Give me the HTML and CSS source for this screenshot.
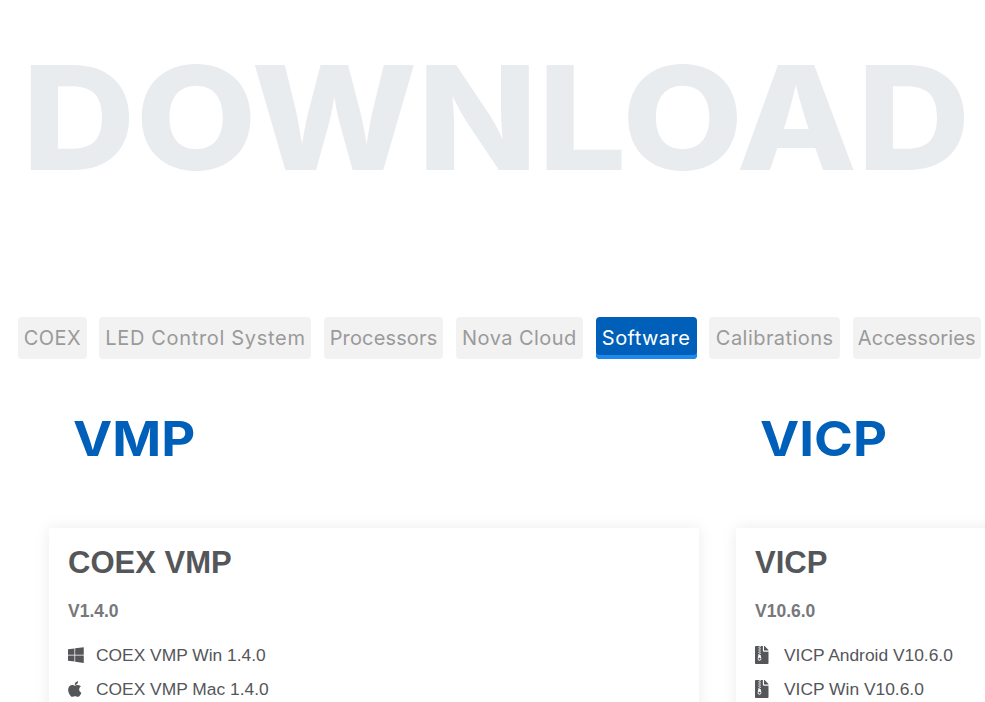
FILE: index.html
```html
<!DOCTYPE html>
<html lang="en">
<head>
    <meta charset="UTF-8">
    <meta name="viewport" content="width=device-width, initial-scale=1.0">
    <title>Download</title>
    <link rel="stylesheet" href="styles.css">
</head>
<body>
    <!-- Page Title -->
    <h1 class="page-title"><span>DOWNLOAD</span></h1>

    <!-- Category Tabs -->
    <nav class="tabs">
        <a href="#" class="tab">COEX</a>
        <a href="#" class="tab tab-long">LED Control System</a>
        <a href="#" class="tab tab-tight">Processors</a>
        <a href="#" class="tab">Nova Cloud</a>
        <a href="#" class="tab active">Software</a>
        <a href="#" class="tab">Calibrations</a>
        <a href="#" class="tab tab-tight">Accessories</a>
    </nav>

    <!-- Software Columns -->
    <div class="columns">
        <section class="column">
            <h2 class="column-title"><span>VMP</span></h2>
            <div class="card">
                <h3>COEX VMP</h3>
                <h4>V1.4.0</h4>
                <ul class="files">
                    <li>
                        <svg class="icon" viewBox="0 0 448 512" preserveAspectRatio="xMinYMid"><path d="M0 93.7l183.6-25.3v177.4H0V93.7zm0 324.6l183.6 25.3V268.4H0v149.9zm203.8 28L448 480V268.4H203.8v177.9zm0-380.6v180.1H448V32L203.8 65.7z"/></svg>
                        COEX VMP Win 1.4.0
                    </li>
                    <li>
                        <svg class="icon" viewBox="0 0 384 512" preserveAspectRatio="xMinYMid"><path d="M318.7 268.7c-.2-36.7 16.4-64.4 50-84.8-18.8-26.9-47.2-41.7-84.7-44.6-35.5-2.8-74.3 20.7-88.5 20.7-15 0-49.4-19.7-76.4-19.7C63.3 141.2 4 184.8 4 273.5q0 39.3 14.4 81.2c12.8 36.7 59 126.7 107.2 125.2 25.2-.6 43-17.9 75.8-17.9 31.8 0 48.3 17.9 76.4 17.9 48.6-.7 90.4-82.5 102.6-119.3-65.2-30.7-61.7-90-61.7-91.9zm-56.6-164.2c27.3-32.4 24.8-61.9 24-72.5-24.1 1.4-52 16.4-67.9 34.9-17.5 19.8-27.8 44.3-25.6 71.9 26.1 2 49.9-11.4 69.5-34.3z"/></svg>
                        COEX VMP Mac 1.4.0
                    </li>
                </ul>
            </div>
        </section>
        <section class="column">
            <h2 class="column-title"><span>VICP</span></h2>
            <div class="card">
                <h3>VICP</h3>
                <h4>V10.6.0</h4>
                <ul class="files">
                    <li>
                        <svg class="icon icon-file" viewBox="0 0 384 512" preserveAspectRatio="xMinYMid"><path d="M377 105L279.1 7c-4.5-4.5-10.6-7-17-7H256v128h128v-6.1c0-6.3-2.5-12.4-7-16.9zM128.4 336c-17.9 0-32.4 12.1-32.4 27 0 15 14.6 27 32.5 27s32.4-12.1 32.4-27-14.6-27-32.5-27zM224 136V0h-63.6v32h-32V0H24C10.7 0 0 10.7 0 24v464c0 13.3 10.7 24 24 24h336c13.3 0 24-10.7 24-24V160H248c-13.2 0-24-10.8-24-24zM95.9 32h32v32h-32zm32.3 384c-33.2 0-58-30.4-51.4-62.9L96.4 256v-32h32v-32h-32v-32h32v-32h-32V96h32V64h32v32h-32v32h32v32h-32v32h32v32h-32v32h22.1c5.7 0 10.7 4.1 11.8 9.7l17.3 87.7c6.4 32.4-18.4 62.6-51.4 62.6z"/></svg>
                        VICP Android V10.6.0
                    </li>
                    <li>
                        <svg class="icon icon-file" viewBox="0 0 384 512" preserveAspectRatio="xMinYMid"><path d="M377 105L279.1 7c-4.5-4.5-10.6-7-17-7H256v128h128v-6.1c0-6.3-2.5-12.4-7-16.9zM128.4 336c-17.9 0-32.4 12.1-32.4 27 0 15 14.6 27 32.5 27s32.4-12.1 32.4-27-14.6-27-32.5-27zM224 136V0h-63.6v32h-32V0H24C10.7 0 0 10.7 0 24v464c0 13.3 10.7 24 24 24h336c13.3 0 24-10.7 24-24V160H248c-13.2 0-24-10.8-24-24zM95.9 32h32v32h-32zm32.3 384c-33.2 0-58-30.4-51.4-62.9L96.4 256v-32h32v-32h-32v-32h32v-32h-32V96h32V64h32v32h-32v32h32v32h-32v32h32v32h-32v32h22.1c5.7 0 10.7 4.1 11.8 9.7l17.3 87.7c6.4 32.4-18.4 62.6-51.4 62.6z"/></svg>
                        VICP Win V10.6.0
                    </li>
                </ul>
            </div>
        </section>
    </div>
</body>
</html>
```

FILE: styles.css
```css
/* General Reset */
* {
    margin: 0;
    padding: 0;
    box-sizing: border-box;
}

html, body {
    height: 702px;
    overflow: hidden;
}

body {
    font-family: 'Liberation Sans', Arial, sans-serif;
    background: #fff;
    color: #54565a;
}

/* Page Title */
.page-title {
    font-family: 'Inter', sans-serif;
    font-size: 144px;
    font-weight: 800;
    line-height: 120px;
    color: #e9ecef;
    white-space: nowrap;
    padding: 58px 0 0 22px;
    height: 317px;
}

/* Inter is narrower than the original face, so widen it */
.page-title span {
    display: inline-block;
    transform: scaleX(1.09);
    transform-origin: left center;
}

/* Category Tabs */
.tabs {
    display: grid;
    grid-template-columns: 69px 212px 119.5px 127.5px 101px 131.5px 128px;
    gap: 12.4px;
    margin-left: 18px;
    white-space: nowrap;
}

.tab {
    display: flex;
    align-items: center;
    justify-content: center;
    height: 42px;
    font-family: 'Inter', sans-serif;
    font-size: 20px;
    letter-spacing: 0.45px;
    color: #9a9a9a;
    background: #f2f2f2;
    border-radius: 4px;
    text-decoration: none;
}

.tab-long {
    letter-spacing: 0.68px;
}

.tab-tight {
    letter-spacing: 0.15px;
}

.tab.active {
    color: #fff;
    background: #0060b9;
    box-shadow: inset 0 -4px 0 #1e88ee;
}

/* Software Columns */
.columns {
    display: flex;
    gap: 37px;
    margin-left: 49px;
}

.column {
    flex: 0 0 650px;
}

.column-title {
    font-family: 'Inter', sans-serif;
    font-size: 48px;
    font-weight: 700;
    line-height: 60px;
    color: #0060b9;
    padding: 50px 0 0 23.5px;
    height: 169px;
}

.column-title span {
    display: inline-block;
    transform: scaleX(1.095);
    transform-origin: left center;
}

/* Card */
.card {
    background: #fff;
    padding: 17px 19px;
    box-shadow: 0 0 15px rgba(0, 0, 0, 0.08);
}

.card h3 {
    font-size: 31px;
    font-weight: 700;
    line-height: 36px;
    margin-bottom: 19px;
}

.card h4 {
    font-size: 17.5px;
    font-weight: 700;
    line-height: 22px;
    color: #77787b;
    margin-bottom: 16px;
}

.files {
    list-style: none;
}

.files li {
    display: flex;
    align-items: center;
    height: 34px;
    font-size: 17.4px;
}

.icon {
    flex: 0 0 16px;
    height: 18px;
    margin-right: 12px;
    fill: #54565a;
}

.icon-file {
    margin-right: 13px;
}
```
